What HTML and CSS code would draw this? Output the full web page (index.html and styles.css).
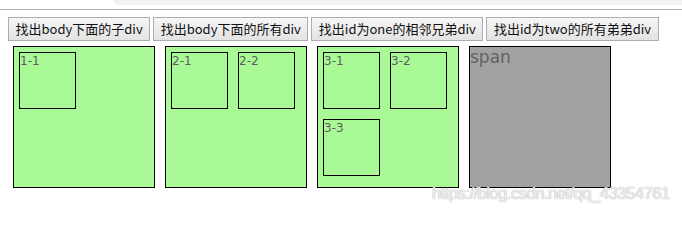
FILE: index.html
```html
<!DOCTYPE html>
<html lang="zh">
<head>
<meta charset="utf-8">
<title>jQuery selector demo</title>
<link rel="stylesheet" href="styles.css">
</head>
<body>
<div class="chrome"><div class="chrome-tab"></div></div>
<div class="page">
  <div class="buttons">
    <button class="btn" type="button">找出body下面的子div</button>
    <button class="btn" type="button">找出body下面的所有div</button>
    <button class="btn" type="button">找出id为one的相邻兄弟div</button>
    <button class="btn" type="button">找出id为two的所有弟弟div</button>
  </div>
  <div class="boxes">
    <div class="box green">
      <div class="mini green">1-1</div>
    </div>
    <div class="box green">
      <div class="mini green">2-1</div>
      <div class="mini green">2-2</div>
    </div>
    <div class="box green">
      <div class="mini green">3-1</div>
      <div class="mini green">3-2</div>
      <div class="mini green">3-3</div>
    </div>
    <span class="box gray">span</span>
  </div>
</div>
<div class="watermark">https://blog.csdn.net/qq_43354761</div>
</body>
</html>
```
FILE: styles.css
```css
html, body {
  margin: 0;
  padding: 0;
  background: #fff;
}
body {
  position: relative;
  width: 682px;
  height: 211px;
  overflow: hidden;
}
.chrome {
  height: 9px;
  border-bottom: 1px solid #b4b4b4;
  display: flex;
  justify-content: flex-end;
}
.chrome-tab {
  width: 569px;
  height: 5px;
  background: #f1f2f4;
  border-bottom-left-radius: 8px;
}
.page {
  padding: 7px 8px 0 8px;
}
.buttons {
  display: flex;
  gap: 3px;
  height: 24px;
}
.btn {
  height: 24px;
  margin: 0;
  padding: 0 6.5px;
  font-family: "Noto Sans CJK SC", "Noto Sans", sans-serif;
  font-size: 13px;
  color: #111;
  background: linear-gradient(#f6f6f6, #e3e3e3);
  border: 1px solid #adadad;
  border-radius: 0;
  line-height: 20px;
  white-space: nowrap;
}
.boxes {
  display: flex;
  gap: 10px;
  margin-top: 5px;
  padding-left: 5px;
}
.box {
  box-sizing: content-box;
  width: 140px;
  height: 140px;
  border: 1px solid #000;
  display: flex;
  flex-wrap: wrap;
  align-content: flex-start;
  font-family: "DejaVu Sans", Verdana, sans-serif;
  color: #5c5c5c;
}
.mini {
  width: 55px;
  height: 54px;
  border: 1px solid #000;
  margin: 5px;
  font-size: 12px;
  line-height: 14px;
  padding-top: 1px;
  box-sizing: content-box;
}
.green {
  background: #a9f996;
}
.gray {
  background: #a2a2a2;
  font-size: 17px;
  line-height: 20px;
  color: #626262;
}
.watermark {
  position: absolute;
  left: 432px;
  top: 184px;
  white-space: nowrap;
  font-family: "Liberation Sans", Arial, sans-serif;
  font-size: 17px;
  letter-spacing: -0.7px;
  color: rgba(255, 255, 255, 0.75);
  text-shadow: 0 0 1px #b8b8b8, 0 0 1px #b8b8b8;
}
```
